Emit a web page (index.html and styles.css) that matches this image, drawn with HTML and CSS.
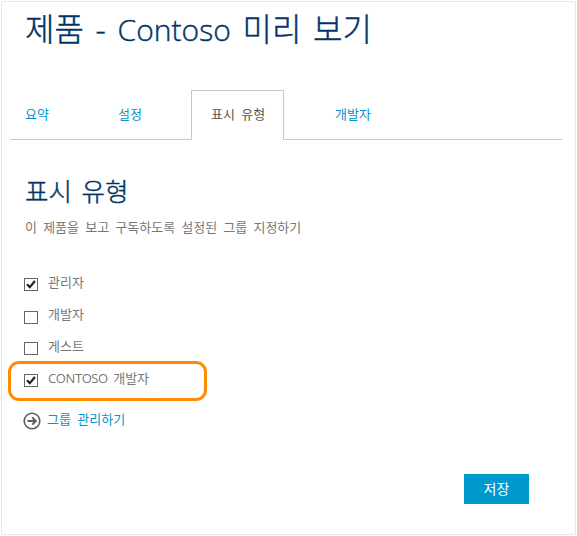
FILE: index.html
```html
<!DOCTYPE html>
<html lang="ko">
<head>
<meta charset="utf-8">
<title>제품 - Contoso 미리 보기</title>
<link rel="stylesheet" href="styles.css">
</head>
<body>
<main class="page">
  <h1 class="title">제품 - <span class="title-name">Contoso</span> 미리 보기</h1>
  <nav class="tabs">
    <a class="tab tab-summary">요약</a>
    <a class="tab tab-settings">설정</a>
    <a class="tab tab-active">표시 유형</a>
    <a class="tab tab-developers">개발자</a>
  </nav>
  <section class="content">
    <h2 class="heading">표시 유형</h2>
    <p class="description">이 제품을 보고 구독하도록 설정된 그룹 지정하기</p>
    <div class="groups">
      <label class="group"><svg class="box" viewBox="0 0 14 13"><rect x=".5" y=".5" width="13" height="12"/><path d="M3 6.2 5.8 9.2 11 3"/></svg><span class="name">관리자</span></label>
      <label class="group"><svg class="box" viewBox="0 0 14 13"><rect x=".5" y=".5" width="13" height="12"/></svg><span class="name">개발자</span></label>
      <label class="group"><svg class="box" viewBox="0 0 14 13"><rect x=".5" y=".5" width="13" height="12"/></svg><span class="name">게스트</span></label>
      <label class="group highlighted"><svg class="box" viewBox="0 0 14 13"><rect x=".5" y=".5" width="13" height="12"/><path d="M3 6.2 5.8 9.2 11 3"/></svg><span class="name"><span class="latin">CONTOSO</span> 개발자</span></label>
    </div>
    <a class="manage"><svg class="arrow" viewBox="0 0 18 18"><circle cx="9" cy="9" r="7.8"/><path d="M4.5 9H13M9.2 5.4 12.8 9l-3.6 3.6" stroke-width="2"/></svg><span class="manage-text">그룹 관리하기</span></a>
  </section>
  <button class="save">저장</button>
</main>
</body>
</html>
```
FILE: styles.css
```css
* { box-sizing: border-box; }
body {
  margin: 0;
  padding: 1px;
  background: #fff;
  font: 13px/20px "Open Sans", "Noto Sans CJK KR", sans-serif;
  color: #777;
}
.page {
  width: 575px;
  height: 534px;
  border: 1px solid #e9e9e9;
  display: flex;
  flex-direction: column;
}
.title, .heading {
  margin: 0 0 0 23px;
  font-family: "Open Sans", "Noto Sans CJK KR", sans-serif;
  font-weight: 300;
  color: #003468;
  -webkit-text-stroke: .4px #003468;
  white-space: nowrap;
}
.title {
  height: 88px;
  padding-top: 5px;
  font-size: 32px;
  line-height: 44px;
  word-spacing: 3.4px;
}
.title-name { font-size: 30px; }
.tabs {
  display: flex;
  flex: none;
  width: 552px;
  height: 50px;
  margin-left: 8px;
  border-bottom: 1px solid #c8c8c8;
  color: #0096cc;
}
.tab { height: 50px; line-height: 48px; white-space: nowrap; }
.tab-summary { width: 93px; padding-left: 15px; }
.tab-settings { width: 88px; padding-left: 15px; }
.tab-active {
  width: 93px;
  border: 1px solid #c8c8c8;
  border-bottom: 0;
  background: #fff;
  color: #555;
  padding-left: 19px;
  line-height: 46px;
  word-spacing: 3px;
}
.tab-developers { padding-left: 51px; }
.content { height: 334px; }
.heading {
  padding-top: 31px;
  font-size: 25.5px;
  line-height: 40px;
  word-spacing: 3px;
}
.description { margin: 6px 0 0 23px; word-spacing: 2.8px; white-space: nowrap; }
.groups { margin-top: 33px; }
.group {
  display: flex;
  align-items: flex-start;
  height: 32px;
  margin-left: 22px;
  padding-top: 8px;
}
.box { width: 14px; height: 13px; margin-right: 10px; fill: none; }
.group:nth-child(2) .box { margin-top: 1px; }
.box rect { stroke: #666; }
.box path { stroke: #222; stroke-width: 2.2; }
.name { margin-top: -6px; word-spacing: 2px; }
.latin { letter-spacing: -.4px; }
.highlighted {
  width: 199px;
  height: 40px;
  margin: -5px 0 0 6px;
  padding: 10px 0 0 13px;
  border: 3px solid #ff8c00;
  border-radius: 11px;
}
.manage {
  display: flex;
  align-items: center;
  margin: 11px 0 0 21px;
  color: #0096cc;
  word-spacing: 3px;
}
.manage-text { margin-top: -4px; }
.arrow { width: 18px; height: 18px; margin: 0 6px 0 0; fill: none; stroke: #5c5c5c; stroke-width: 1.6; }
.save {
  width: 65px;
  height: 30px;
  margin-left: 462px;
  padding: 0 0 2px;
  border: 0;
  background: #0099cd;
  color: #fff;
  font: 14px/28px "Noto Sans CJK KR", sans-serif;
}
```
